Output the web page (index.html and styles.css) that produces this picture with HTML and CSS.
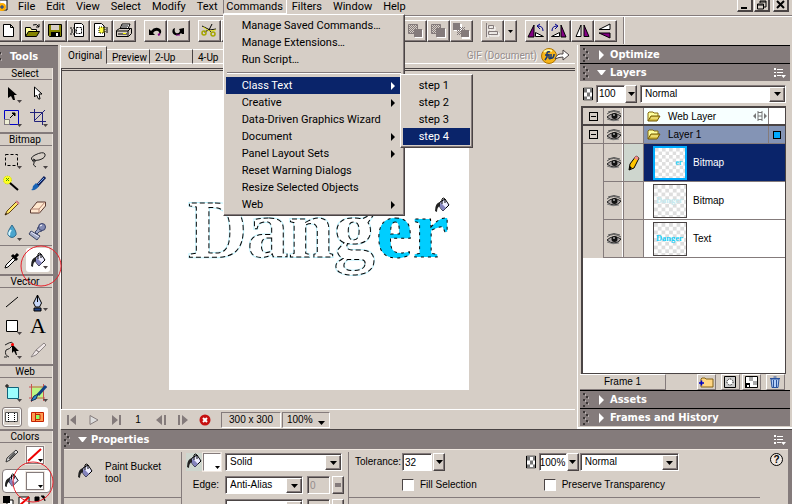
FILE: index.html
```html
<!DOCTYPE html>
<html lang="en">
<head>
<meta charset="utf-8">
<title>Graphics editor</title>
<link rel="stylesheet" href="styles.css">
</head>
<body>
<svg class="sprite" aria-hidden="true">
  <defs>
    <pattern id="checks" width="8" height="8" patternUnits="userSpaceOnUse"><rect width="8" height="8" fill="#fff"/><path d="M0 0h4v4H0zM4 4h4v4H4z" fill="#dedede"/></pattern>
    <pattern id="dots" width="2" height="2" patternUnits="userSpaceOnUse"><path d="M0 0h1v1H0zM1 1h1v1H1z" fill="#847b7b"/></pattern>
  </defs>
  <symbol id="fly" viewBox="0 0 24 24"><path d="M17 18h5l-2.500 3z" fill="#4a4444"/></symbol>
  <symbol id="down" viewBox="0 0 7 4"><path d="M0 0h7L3.500 4z"/></symbol>
  <symbol id="bucket" viewBox="0 0 16 16">
    <path d="M6 5l5-3 4 6-6 6-4-5z" fill="#c6c6f7" stroke="#000"/><path d="M7 6l4 5 3-3-3-5z" fill="#efefff"/><path d="M5 9l4 5 3-3-5-5z" fill="#8484bd"/>
    <path d="M8 7V2q1-2 3 0v4" fill="none" stroke="#000"/><path d="M6 5Q1 6 1 14l2 1q0-5 3-6z" fill="#222"/>
  </symbol>
  <symbol id="eye" viewBox="0 0 16 12"><path d="M1 4Q7-1 15 4M2 2Q8-1 14 2" fill="none" stroke="#555" stroke-width="1"/><path d="M1 7Q7 1 15 6q-2 4-7 4-4 0-7-3z" fill="#a8a2a2" stroke="#222"/><circle cx="8.500" cy="6" r="3" fill="#111"/><circle cx="8" cy="5" r="1" fill="#aaa"/><path d="M1 9q6 3 12 1" fill="none" stroke="#777"/></symbol>
  <symbol id="folder" viewBox="0 0 14 11"><path d="M1 10V2l1-1h4l1 1h4v3" fill="#ffff9c" stroke="#846b10"/><path d="M1 10l3-5h9l-3 5z" fill="#d6bd42" stroke="#735a08"/><path d="M4 7h7" stroke="#fff79c"/></symbol>
  <symbol id="checker" viewBox="0 0 10 13"><path d="M.5.5h9v12h-9z" fill="#fff" stroke="#000"/><path d="M1 1h3v4H1zM7 1h2v4H7zM4 5h3v4H4zM1 9h3v3H1zM7 9h2v3H7z" fill="#777"/></symbol>
  <symbol id="grip" viewBox="0 0 6 14"><path d="M0 0h2v2H0zM3 3h2v2H3zM0 6h2v2H0zM3 9h2v2H3zM0 12h2v2H0z" fill="#3a3535"/><path d="M2 1h1v2H2zM5 4h1v2H5zM2 7h1v2H2zM5 10h1v2H5z" fill="#b5adad"/></symbol>
  <symbol id="options" viewBox="0 0 12 10"><path d="M0 0h2v2H0zM0 4h2v1H0zM0 7h2v2H0zM3 1h6v1H3zM3 4h6v1H3zM3 7h4v1H3zM7 7h5L9.500 10z" fill="#fff"/></symbol>
</svg>

<div class="app">
  <header class="top">
    <nav class="menubar">
      <svg class="doc-icon" viewBox="0 0 8 12" aria-hidden="true"><path d="M0 0h7v10H2" fill="#fff" stroke="#000"/><circle cx="2" cy="7" r="4" fill="#ffad00"/><path d="M0 7h4M2 5v4" stroke="#0039a5"/></svg>
      <button>File</button><button>Edit</button><button>View</button><button>Select</button><button>Modify</button><button>Text</button>
      <div class="menu-host">
        <button class="open">Commands</button>
        <div class="menu main-menu">
          <button>Manage Saved Commands…</button>
          <button>Manage Extensions…</button>
          <button>Run Script…</button>
          <hr>
          <div class="sub-host">
            <button class="sub active">Class Text</button>
            <div class="menu sub-menu">
              <button>step 1</button><button>step 2</button><button>step 3</button><button class="active">step 4</button>
            </div>
          </div>
          <button class="sub">Creative</button>
          <button>Data-Driven Graphics Wizard</button>
          <button class="sub">Document</button>
          <button class="sub">Panel Layout Sets</button>
          <button>Reset Warning Dialogs</button>
          <button>Resize Selected Objects</button>
          <button class="sub">Web</button>
        </div>
      </div>
      <button>Filters</button><button>Window</button><button>Help</button>
      <div class="window-buttons">
        <button aria-label="Minimize"><svg viewBox="0 0 13 11"><path d="M3 7h6v2H3z"/></svg></button>
        <button aria-label="Restore"><svg viewBox="0 0 13 11"><path d="M5 1h6v6H9M5 1v2M5 2h6M2.500 4v5h6V4zM2 5h7" fill="none" stroke="#000"/></svg></button>
        <button class="close" aria-label="Close"><svg viewBox="0 0 13 11"><path d="M3 1l7 7M10 1L3 8" fill="none" stroke="#000" stroke-width="2"/></svg></button>
      </div>
    </nav>
    <div class="toolbar">
      <div class="group">
        <button aria-label="New"><svg viewBox="0 0 20 18"><path d="M4.500 2.500h7l3 3v9h-10zM11.500 2.500v3h3" fill="#fff" stroke="#000"/></svg></button>
        <button aria-label="Open"><svg viewBox="0 0 20 18"><path d="M3.500 14V5.500h5l1 2h5v2" fill="#ffff9c" stroke="#000"/><path d="M3.500 14.500l3-5h11l-3 5z" fill="#848400" stroke="#000"/><path d="M11 3q4-2 6 2M17 2v3h-3" fill="none" stroke="#000"/></svg></button>
        <button aria-label="Save"><svg viewBox="0 0 20 18"><path d="M3.500 2.500h13v12h-12l-1-1z" fill="#848400" stroke="#000"/><path d="M6 3h8v5H6z" fill="#d6cec6"/><path d="M6 10h9v5H6z"/><path d="M11 11h2v3h-2z" fill="#fff"/></svg></button>
        <button aria-label="Import"><svg viewBox="0 0 20 18"><path d="M6.500 1.500h7l2 2v11h-9z" fill="#fff" stroke="#000"/><path d="M8.500 5.500h5v6h-5zM2 6h6M3 8h6M3 10h6M2 12h6" fill="none" stroke="#000" stroke-dasharray="2 1"/></svg></button>
        <button aria-label="Export"><svg viewBox="0 0 20 18"><path d="M3.500 1.500h7l3 3v10h-10z" fill="#fff" stroke="#000"/><path d="M8 5h6v6H8z" fill="#ffff42" stroke="#000" stroke-dasharray="1 1"/><path d="M12 6h5M12 8h5M12 10h5" stroke="#000" stroke-dasharray="2 1"/></svg></button>
        <button aria-label="Print"><svg viewBox="0 0 20 18"><path d="M6 7l2-5h8l-2 5M8 4h6M7 6h6" fill="#fff" stroke="#000"/><path d="M2.500 8.500l3-2h12v5l-3 3h-12z" fill="#d6cec6" stroke="#000"/><path d="M3 9h11v5M14 9l3-3M4 12h9" fill="none" stroke="#000"/><path d="M9 11h3v1H9z" fill="#ff0"/></svg></button>
      </div>
      <div class="group">
        <button aria-label="Undo"><svg viewBox="0 0 20 18"><path d="M4 7v6h6l-2-2q2-3 5-2 2 1 1 4l2-2q1-4-3-5-4-1-7 3z"/><path d="M13 13l2-1" stroke="#840084" stroke-width="2"/></svg></button>
        <button aria-label="Redo"><svg viewBox="0 0 20 18"><path d="M16 6v6h-2l-1-1q-2 3-6 2-4-2-2-6l2-1q-1 4 1 5 3 1 4-2l-1-2z"/><path d="M8 13h4" stroke="#840084"/></svg></button>
      </div>
      <div class="group">
        <button aria-label="Cut"><svg viewBox="0 0 20 18"><path d="M3 4l8 4 6-1M13 2l-3 6-5 2M10 8l3 3" fill="none" stroke="#000"/><circle cx="5" cy="11" r="2" fill="none" stroke="#a5a500" stroke-width="1.500"/><circle cx="14" cy="12" r="2" fill="none" stroke="#a5a500" stroke-width="1.500"/><path d="M4 5l6 4M17 8l-7 1" stroke="#e7e721"/></svg></button>
        <button aria-label="Copy"></button><button aria-label="Paste"></button>
      </div>
      <div class="group order">
        <button aria-label="Bring to front"></button>
        <button aria-label="Bring forward"><svg viewBox="0 0 20 18"><path d="M10 8h8v8h-8z" fill="#fff"/><path d="M9 7h8v8H9z" fill="#847b7b"/><path d="M3.500 2.500h9v9h-9z" fill="url(#dots)" stroke="#847b7b"/></svg></button>
        <button aria-label="Send backward"><svg viewBox="0 0 20 18"><path d="M3.500 2.500h9v9h-9z" fill="url(#dots)" stroke="#847b7b"/><path d="M9 7h9v9H9z" fill="#fff"/><path d="M8 6h9v9H8z" fill="#847b7b"/></svg></button>
        <button aria-label="Send to back"><svg viewBox="0 0 20 18"><path d="M11 9h8v8h-8zM3 2h8v7H3z" fill="#fff"/><path d="M6 5h8v8H6z" fill="url(#dots)"/><path d="M2 1h7v7H2zM10 8h8v7h-8z" fill="#847b7b"/></svg></button>
      </div>
      <div class="group">
        <button aria-label="Align"><svg viewBox="0 0 20 18"><path d="M5 2v13M7 4h5v3H7zM7 10h9v3H7z" transform="translate(1 1)" fill="none" stroke="#fff"/><path d="M4.500 1v14M6.500 3.500h5v3h-5zM6.500 9.500h9v3h-9z" fill="none" stroke="#847b7b"/></svg></button>
        <button class="narrow" aria-label="Align options"><svg viewBox="0 0 10 18"><path d="M3 8h5l-2.500 3z"/></svg></button>
      </div>
      <div class="group">
        <button aria-label="Rotate left"><svg viewBox="0 0 20 18"><path d="M2 15h6V3z" fill="#840084" stroke="#000"/><path d="M9.500 14.500h8l-8-4z" fill="#fff" stroke="#000"/><path d="M17 9q0-5-5-5M14 2l-3 2 3 3" fill="none" stroke="#00008c"/></svg></button>
        <button aria-label="Rotate right"><svg viewBox="0 0 20 18"><path d="M12 15h5L12 3z" fill="#840084" stroke="#000"/><path d="M2.500 14.500h8v-4z" fill="#fff" stroke="#000"/><path d="M3 9q0-5 5-5M6 2l3 2-3 3" fill="none" stroke="#00008c"/></svg></button>
        <button aria-label="Flip horizontal"><svg viewBox="0 0 20 18"><path d="M12 14.500h5L12 3z" fill="#840084" stroke="#000"/><path d="M4 14.500h5V3z" fill="#fff" stroke="#000"/></svg></button>
        <button aria-label="Flip vertical"><svg viewBox="0 0 20 18"><path d="M4 11h11v5z" fill="#840084" stroke="#000"/><path d="M4 7.500h11V2z" fill="#fff" stroke="#000"/></svg></button>
      </div>
    </div>
  </header>

  <div class="workspace">
    <aside class="tools">
      <h2 class="tools-title"><svg viewBox="0 0 6 14"><use href="#grip"/></svg>Tools</h2>
      <section class="tool-section">
        <h3>Select</h3>
        <div class="tool-grid">
          <button aria-label="Pointer"><svg viewBox="0 0 24 24"><path d="M8 5v11l3-2 2 4h2l-1-5h3z"/><use href="#fly"/></svg></button>
          <button aria-label="Subselection"><svg viewBox="0 0 24 24"><path d="M8.500 5v10l2-2 2 4h1.500l-1-5h3z" fill="#fff" stroke="#000"/></svg></button>
          <button aria-label="Scale"><svg viewBox="0 0 24 24"><path d="M4.500 4.500h14v14h-14z" fill="none" stroke="#0000c6"/><path d="M4.500 13.500h5v5h-5z" fill="#efefd6" stroke="#847b7b"/><path d="M10 12l3-3M12 7h3v3z" fill="#000" stroke="#000"/><use href="#fly"/></svg></button>
          <button aria-label="Crop"><svg viewBox="0 0 24 24"><path d="M8.500 3v12.500H20M4 6.500h12.500V19M8 15L19 4" fill="none" stroke="#21217b"/><use href="#fly"/></svg></button>
        </div>
      </section>
      <section class="tool-section">
        <h3>Bitmap</h3>
        <div class="tool-grid">
          <button aria-label="Marquee"><svg viewBox="0 0 24 24"><path d="M5.500 6.500h12v11h-12z" fill="none" stroke="#000" stroke-dasharray="3 2"/><use href="#fly"/></svg></button>
          <button aria-label="Lasso"><svg viewBox="0 0 24 24"><path d="M7 13q-4-3 2-6 8-4 10-1 1 4-6 6-5 1-7 0M7 11q3 0 2 3-2 1-2-1M8 15q-2 2 2 4" fill="none" stroke="#222"/><use href="#fly"/></svg></button>
          <button aria-label="Magic wand"><svg viewBox="0 0 24 24"><circle cx="7.500" cy="8" r="4" fill="#ffff21" stroke="#c6d600" stroke-dasharray="1 1"/><path d="M6 6l3 3M9 6L6 9" stroke="#429c00"/><path d="M10 11l8 7" stroke="#000" stroke-width="2"/></svg></button>
          <button aria-label="Brush"><svg viewBox="0 0 24 24"><path d="M19 5l-8 9" stroke="#10215a" stroke-width="3"/><path d="M18 6l-6 6" stroke="#73a5ef"/><path d="M10 11l3 3q-3 5-8 4 2-1 2-4z" fill="#1863b5"/></svg></button>
          <button aria-label="Pencil"><svg viewBox="0 0 24 24"><path d="M17 5l2 2L9 17l-4 2 2-4z" fill="#ffe763" stroke="#634218"/><path d="M16 5l3 3" stroke="#d6848c" stroke-width="2"/><path d="M5 19l2-1-1-1z"/></svg></button>
          <button aria-label="Eraser"><svg viewBox="0 0 24 24"><path d="M4.500 14L11 6h8.500v4l-6 7h-9z" fill="#ffe7ce" stroke="#5a3931"/><path d="M5 13h8l6-7M13 13v4" fill="none" stroke="#b58473"/></svg></button>
          <button aria-label="Blur"><svg viewBox="0 0 24 24"><path d="M12 5q-5 7-4 10 4 5 8 0 1-3-4-10z" fill="#4aa5ce" stroke="#316b8c"/><path d="M11 10q-3 4-1 5" stroke="#d6f7ff" fill="none" stroke-width="2"/><use href="#fly"/></svg></button>
          <button aria-label="Rubber stamp"><svg viewBox="0 0 24 24"><path d="M5 11l9 5-3 4-8-6z" fill="#a5adc6" stroke="#394263"/><path d="M5 12l8 5" stroke="#e7e7ff"/><path d="M9 12q3-2 3-5l4 4q-3 0-5 3z" fill="#9ca5c6" stroke="#424a6b"/><circle cx="16" cy="7" r="3.500" fill="#848cb5" stroke="#39426b"/><path d="M14 6l2-1" stroke="#fff"/></svg></button>
        </div>
        <div class="tool-grid ruled">
          <button aria-label="Eyedropper"><svg viewBox="0 0 24 24"><path d="M14 9l-8 8-1 3 3-1 8-8" fill="#fff" stroke="#000"/><path d="M12 7l5 5M15 9l3-3" stroke="#000" stroke-width="3"/></svg></button>
          <button class="picked" aria-label="Paint bucket"><svg viewBox="0 0 24 24"><use href="#bucket" x="4" y="4" width="16" height="16"/><use href="#fly"/></svg></button>
        </div>
      </section>
      <section class="tool-section">
        <h3>Vector</h3>
        <div class="tool-grid">
          <button aria-label="Line"><svg viewBox="0 0 24 24"><path d="M6 17L18 7" stroke="#000"/></svg></button>
          <button aria-label="Pen"><svg viewBox="0 0 24 24"><path d="M11.500 5l-4 8 2 4h4l2-4z" fill="#c6d6f7" stroke="#000"/><path d="M11.500 5v7M8 18h7v3H8z" fill="#214284" stroke="#000"/><use href="#fly"/></svg></button>
          <button aria-label="Rectangle"><svg viewBox="0 0 24 24"><path d="M6.500 6.500h11v11h-11z" fill="#fff" stroke="#000"/><use href="#fly"/></svg></button>
          <button class="type-tool" aria-label="Text">A</button>
          <button aria-label="Freeform"><svg viewBox="0 0 24 24"><path d="M5 7q10-6 7 1-2 3-6 4-2 5 3 7M7 19H4" fill="none" stroke="#222"/><path d="M12 6v9l2-2 2 4h1l-1-4h3z"/><circle cx="12.500" cy="6.500" r="1.500" fill="#f00"/><use href="#fly"/></svg></button>
          <button aria-label="Knife"><svg viewBox="0 0 24 24"><path d="M18 5l2 2-7 7-3-2zM10 12l3 2-3 3-5 2z" fill="#efe7e7" stroke="#8c8484"/></svg></button>
        </div>
      </section>
      <section class="tool-section web-section">
        <h3>Web</h3>
        <div class="tool-grid web-grid">
          <button aria-label="Hotspot"><svg viewBox="0 0 24 24"><path d="M7.500 6.500h11v11h-11z" fill="#9cffff" stroke="#10637b"/><path d="M5 5h4M7 3v4" stroke="#000"/><use href="#fly"/></svg></button>
          <button aria-label="Slice"><svg viewBox="0 0 24 24"><path d="M5 5h12v13H5z" fill="#bdf784"/><path d="M3 6h18M3 17h16M5.500 3v18M17.500 3v17" stroke="#c65252"/><path d="M20 5l-8 9" stroke="#104284" stroke-width="3"/><path d="M12 13l-2 5-5 2 3-5z" fill="#298cce" stroke="#183152"/><use href="#fly"/></svg></button>
          <button class="framed" aria-label="Hide slices"><svg viewBox="0 0 24 24"><path d="M5.500 7.500h12v9h-12z" fill="#fff" stroke="#555"/><path d="M8.500 8v9M14.500 8v9" stroke="#000" stroke-dasharray="1 1"/></svg></button>
          <button class="picked" aria-label="Show slices"><svg viewBox="0 0 24 24"><path d="M5.500 7.500h12v9h-12z" fill="#ff9c52" stroke="#c62100"/><path d="M9.500 7v10M9 9.500h5v5H9" fill="#8cff63" stroke="#c62100"/></svg></button>
        </div>
      </section>
      <section class="tool-section colors">
        <h3>Colors</h3>
        <div class="color-row">
          <svg viewBox="0 0 24 24"><path d="M16 7l2 2-8 8-4 2 1-4z" fill="#ddd" stroke="#333"/><path d="M15 10l-6 6" stroke="#555" stroke-width="2"/></svg>
          <button class="swatch none" aria-label="Stroke color"><svg viewBox="0 0 16 14"><path d="M1 13L14 1" stroke="#e00" stroke-width="2"/><path d="M11 11h5l-2.500 3z"/></svg></button>
        </div>
        <div class="color-row chosen">
          <svg viewBox="0 0 24 24"><use href="#bucket" x="4" y="4" width="15" height="15"/></svg>
          <button class="swatch" aria-label="Fill color"><svg viewBox="0 0 16 14"><path d="M11 11h5l-2.500 3z"/></svg></button>
        </div>
        <div class="color-actions">
          <button aria-label="Default colors"><svg viewBox="0 0 14 12"><path d="M6 5h6v6H6z" fill="#fff" stroke="#000"/><path d="M2 1h7v7H2z"/></svg></button>
          <button aria-label="No color"><svg viewBox="0 0 14 12"><path d="M2 2h10v9H2z" fill="#fff" stroke="#000"/><path d="M2 11L12 2" stroke="#e00" stroke-width="2"/></svg></button>
          <button aria-label="Swap colors"><svg viewBox="0 0 14 12"><path d="M2 2h4v4H2zM8 1h3l1 5" fill="#000" stroke="#000"/></svg></button>
        </div>
      </section>
      <svg class="ring ring-tool" viewBox="0 0 42 42" aria-hidden="true"><circle cx="21" cy="21" r="20"/></svg>
      <svg class="ring ring-color" viewBox="0 0 42 42" aria-hidden="true"><circle cx="21" cy="21" r="20"/></svg>
    </aside>

    <div class="stage">
      <div class="upper">
        <main class="document">
          <div class="tabs">
            <button class="current">Original</button><button>Preview</button><button>2-Up</button><button>4-Up</button>
            <div class="export"><span>GIF (Document)</span>
              <svg viewBox="0 0 30 18"><circle cx="8" cy="9" r="7.500" fill="#f7b518" stroke="#ad7300"/><path d="M3 5q3-3 8-1" stroke="#fff79c" stroke-width="2" fill="none"/><path d="M4 13l2-3V6q1-2 3-1M4 8h4M8 7v4q1 2 2-1V7v4q2 1 3-3V7" fill="none" stroke="#183973" stroke-width="1.500"/><path d="M14 12q2-6 8-5V3l6 5-6 5v-3q-4 0-8 2z" fill="#fff" stroke="#4a4242"/></svg>
            </div>
          </div>
          <div class="pasteboard">
            <div class="page">
              <svg class="artwork" viewBox="0 0 300 300" role="img" aria-label="Danger">
                <text x="19" y="167" class="outline glow">Dang</text>
                <text x="19" y="167" class="outline">Dang</text>
                <text x="207" y="167" class="solid">er</text>
              </svg>
              <svg class="cursor" viewBox="0 0 16 16" aria-hidden="true"><use href="#bucket"/></svg>
            </div>
          </div>
          <div class="status">
            <button aria-label="First frame"><svg viewBox="0 0 12 12"><path d="M1 1h2v10H1zM10 1v10L4 6z"/></svg></button>
            <button aria-label="Play"><svg viewBox="0 0 12 12"><path d="M2 1.500l8 4.500-8 4.500z" fill="#ddd" stroke="#847b7b"/></svg></button>
            <button aria-label="Last frame"><svg viewBox="0 0 12 12"><path d="M9 1h2v10H9zM2 1v10l6-5z"/></svg></button>
            <output>1</output>
            <button aria-label="Previous frame"><svg viewBox="0 0 12 12"><path d="M9 1h2v10H9zM7 1v10L1 6z"/></svg></button>
            <button aria-label="Next frame"><svg viewBox="0 0 12 12"><path d="M1 1h2v10H1zM5 1v10l6-5z"/></svg></button>
            <button aria-label="Stop"><svg viewBox="0 0 12 12"><circle cx="6" cy="6" r="5.500" fill="#c61010"/><path d="M4 4l4 4M8 4L4 8" stroke="#fff" stroke-width="2"/></svg></button>
            <span class="readout">300 x 300</span>
            <button class="readout zoom">100%<svg viewBox="0 0 7 4"><use href="#down"/></svg></button>
          </div>
        </main>

        <aside class="panels">
          <h2 class="panel-head"><svg class="grip" viewBox="0 0 6 14"><use href="#grip"/></svg><i class="closed"></i>Optimize</h2>
          <h2 class="panel-head"><svg class="grip" viewBox="0 0 6 14"><use href="#grip"/></svg><i></i>Layers<svg class="opts" viewBox="0 0 12 10"><use href="#options"/></svg></h2>
          <div class="layer-controls">
            <svg class="checker" viewBox="0 0 10 13"><use href="#checker"/></svg>
            <input class="opacity" aria-label="Opacity" value="100"><button class="drop" aria-label="Opacity slider"><svg viewBox="0 0 7 4"><use href="#down"/></svg></button>
            <span class="combo"><select aria-label="Blend mode"><option>Normal</option></select><span><svg viewBox="0 0 7 4"><use href="#down"/></svg></span></span>
          </div>
          <ul class="layers">
            <li class="group-row web-row">
              <span class="toggle"><b></b></span><span class="eye"><svg viewBox="0 0 16 12"><use href="#eye"/></svg></span><span class="lock"></span>
              <span class="name"><svg class="folder" viewBox="0 0 14 11"><use href="#folder"/></svg>Web Layer<svg class="share" viewBox="0 0 14 10"><path d="M5 0v10M9 0v10M5 1.500h4M5 5h4M5 8.500h4" fill="none" stroke="#777"/><path d="M3 2v6L0 5zM11 2v6l3-3z" fill="#777"/></svg></span><span class="mark"></span>
            </li>
            <li class="group-row layer-row">
              <span class="toggle"><b></b></span><span class="eye"><svg viewBox="0 0 16 12"><use href="#eye"/></svg></span><span class="lock"></span>
              <span class="name"><svg class="folder" viewBox="0 0 14 11"><use href="#folder"/></svg>Layer 1</span><span class="mark"><b></b></span>
            </li>
            <li class="item selected">
              <span class="toggle"></span><span class="eye"><svg viewBox="0 0 16 12"><use href="#eye"/></svg></span>
              <span class="lock"><svg viewBox="0 0 12 16"><path d="M8 1l3 2-5 10-5 2 1-6z" fill="#ffc600" stroke="#000"/><path d="M7 2l3 2" stroke="#f78c8c" stroke-width="3"/><path d="M1 15l3-2-2-2z"/></svg></span>
              <span class="name"><svg class="thumb" viewBox="0 0 34 34"><rect width="34" height="34" fill="url(#checks)"/><text x="23" y="19" fill="#2cd0f5">er</text></svg>Bitmap</span>
            </li>
            <li class="item">
              <span class="toggle"></span><span class="eye"><svg viewBox="0 0 16 12"><use href="#eye"/></svg></span><span class="lock"></span>
              <span class="name"><svg class="thumb" viewBox="0 0 34 34"><rect width="34" height="34" fill="url(#checks)"/><text x="2" y="19" fill="#c5eaf0">Danger</text></svg>Bitmap</span>
            </li>
            <li class="item">
              <span class="toggle"></span><span class="eye"><svg viewBox="0 0 16 12"><use href="#eye"/></svg></span><span class="lock"></span>
              <span class="name"><svg class="thumb" viewBox="0 0 34 34"><rect width="34" height="34" fill="url(#checks)"/><text x="2" y="19" fill="#18cef7">Danger</text></svg>Text</span>
            </li>
          </ul>
          <div class="layer-foot">
            <button class="frame">Frame 1</button>
            <button aria-label="New layer"><svg viewBox="0 0 16 12"><path d="M3 10.500V3l1-1h3l1 1h7v8H3z" fill="#ffd684" stroke="#846318"/><path d="M1 7h5M3.500 4.500v5" stroke="#0000c6" stroke-width="1.500"/></svg></button>
            <button aria-label="Add mask"><svg viewBox="0 0 16 12"><path d="M2.500.5h11v11h-11z" fill="#ccc" stroke="#000"/><circle cx="8" cy="6" r="3" fill="#fff" stroke="#000" stroke-dasharray="1 1"/></svg></button>
            <button aria-label="New bitmap"><svg viewBox="0 0 16 12"><path d="M2.500.5h12v11h-12z" fill="#fff" stroke="#000"/><path d="M6 1h4v4H6zM10 5h4v4h-4z" fill="#aaa"/><path d="M2 7h5v5H2z"/><path d="M4 9h2v2H4z" fill="#fff"/></svg></button>
            <button aria-label="Delete"><svg viewBox="0 0 16 12"><path d="M4 3h8l-1 8.500H5z" fill="#b5cef7" stroke="#29529c"/><path d="M3 2.500h10M6.500 1h3M6.500 4v7M9.500 4v7" stroke="#29529c"/></svg></button>
          </div>
          <h2 class="panel-head"><svg class="grip" viewBox="0 0 6 14"><use href="#grip"/></svg><i class="closed"></i>Assets</h2>
          <h2 class="panel-head"><svg class="grip" viewBox="0 0 6 14"><use href="#grip"/></svg><i class="closed"></i>Frames and History</h2>
        </aside>
      </div>

      <section class="properties">
        <h2 class="panel-head"><svg class="grip" viewBox="0 0 6 14"><use href="#grip"/></svg><i></i>Properties<svg class="opts" viewBox="0 0 12 10"><use href="#options"/></svg></h2>
        <div class="prop-body">
          <div class="prop-tool"><div class="ruled-box"><svg viewBox="0 0 16 16"><use href="#bucket"/></svg><p>Paint Bucket<br>tool</p></div></div>
          <div class="prop-fill">
            <div class="field-row"><span class="bucket-chip"><svg viewBox="0 0 16 16"><use href="#bucket"/></svg></span>
              <button class="swatch" aria-label="Fill color"><svg viewBox="0 0 16 14"><path d="M11 11h5l-2.500 3z"/></svg></button>
              <span class="combo"><select aria-label="Fill type"><option>Solid</option></select><span><svg viewBox="0 0 7 4"><use href="#down"/></svg></span></span></div>
            <div class="field-row"><label for="edge">Edge:</label>
              <span class="combo edge"><select id="edge"><option>Anti-Alias</option></select><span><svg viewBox="0 0 7 4"><use href="#down"/></svg></span></span>
              <input class="feather" aria-label="Feather" value="0" disabled><button class="drop off" aria-label="Feather slider"><b></b></button></div>
            <div class="field-row"><label for="texture"></label>
              <span class="combo edge"><select id="texture" aria-label="Texture"><option></option></select><span></span></span>
              <input class="feather" aria-label="Texture amount" disabled><button class="drop off" aria-label="Texture slider"></button></div>
          </div>
          <div class="prop-options">
            <div class="ruled-box columns">
              <div>
                <div class="field-row"><label class="tol" for="tolerance">Tolerance:</label><input id="tolerance" class="tol-input" value="32"><button class="drop" aria-label="Tolerance slider"><svg viewBox="0 0 7 4"><use href="#down"/></svg></button></div>
                <div class="field-row check"><input type="checkbox" id="fillsel"><label for="fillsel">Fill Selection</label></div>
              </div>
              <div class="blend">
                <div class="field-row"><svg class="checker" viewBox="0 0 10 13"><use href="#checker"/></svg><input class="alpha" aria-label="Fill opacity" value="100%"><button class="drop" aria-label="Fill opacity slider"><svg viewBox="0 0 7 4"><use href="#down"/></svg></button>
                  <span class="combo mode"><select aria-label="Fill blend mode"><option>Normal</option></select><span><svg viewBox="0 0 7 4"><use href="#down"/></svg></span></span></div>
                <div class="field-row check"><input type="checkbox" id="preserve"><label for="preserve">Preserve Transparency</label></div>
              </div>
            </div>
          </div>
          <button class="help" aria-label="Help">?</button>
        </div>
      </section>
    </div>
  </div>
</div>
</body>
</html>
```
FILE: styles.css
```css
:root {
  --face: #d6cec6;
  --dark: #847b7b;
  --edge: #4a4444;
  --navy: #0a246a;
  --small: "Liberation Sans", sans-serif;
  --title: "DejaVu Sans Condensed", "DejaVu Sans", sans-serif;
}
* { box-sizing: border-box; }
body { margin: 0; background: var(--face); color: #000; font: 11px/17px Roboto, sans-serif; }
h2, h3, p, ul { margin: 0; padding: 0; }
button, input, select { margin: 0; padding: 0; border: 0; border-radius: 0; background: none; color: inherit; font: inherit; }
svg { display: block; flex: none; }
.sprite { position: absolute; width: 0; height: 0; }
.app { display: flex; flex-direction: column; height: 100vh; overflow: hidden; }

/* menu bar */
.menubar { display: flex; height: 15px; padding-right: 3px; }
.menubar > button { height: 12px; line-height: 11px; margin-right: 11px; }
.doc-icon { width: 8px; height: 12px; margin-right: 10px; }
.menu-host { position: relative; margin: 0 5px 0 -6px; }
.open { display: block; width: 64px; height: 14px; line-height: 13px; border: solid; border-width: 0 1px 1px; border-color: #fff #fff #fff var(--dark); }
.menu { position: absolute; z-index: 5; padding: 2px; background: var(--face); border: 1px solid; border-color: #fff var(--edge) var(--edge) #fff; box-shadow: inset -1px -1px var(--dark); }
.menu button { display: block; width: 100%; height: 17px; padding-left: 16px; text-align: left; white-space: nowrap; }
.main-menu { top: 14px; left: 0; width: 182px; }
.menu hr { height: 2px; margin: 4px 1px 3px; border: 0; border-top: 1px solid var(--dark); background: #fff; }
.menu .sub { position: relative; }
.menu .sub::after { content: ""; position: absolute; right: 7px; top: 5px; border: solid transparent; border-width: 4px 0 4px 4px; border-left-color: currentColor; }
.menu .active { background: var(--navy); color: #fff; }
.sub-host { position: relative; }
.sub-menu { left: 174px; top: -3px; width: 73px; }
.window-buttons { display: flex; gap: 1px; margin-left: auto; }
.window-buttons button { width: 16px; height: 12px; border: solid; border-width: 0 2px 2px 1px; border-color: #fff var(--edge) var(--edge) #fff; }
.window-buttons svg { width: 13px; height: 11px; }
.window-buttons .close { margin-left: 2px; }

/* toolbar */
.toolbar { display: flex; align-items: flex-start; gap: 8px; height: 30px; padding-top: 4px; border-top: 1px solid var(--dark); box-shadow: inset 0 1px #fff; }
.group { display: flex; flex: none; }
.group button { width: 23px; height: 22px; border: 1px solid; border-color: #fff var(--edge) var(--edge) #fff; box-shadow: inset -1px -1px var(--dark); }
.group:first-child { margin-left: -2px; }
.group svg { width: 20px; height: 18px; }
.group .narrow { width: 13px; }
.group .narrow svg { width: 10px; }
.order { margin-left: 106px; }
.toolbar::after { content: ""; height: 27px; margin: -3px 0 0 -2px; border-left: 1px solid var(--dark); box-shadow: 1px 0 #fff; }

/* tools column */
.workspace { display: flex; flex: 1; min-height: 0; }
.tools { position: relative; display: flex; flex-direction: column; gap: 2px; width: 58px; flex: none; padding-right: 5px; background: var(--dark); border-top: 1px solid var(--edge); }
.tools-title { display: flex; flex: none; align-items: center; gap: 8px; height: 20px; margin-left: -4px; color: #fff; font: bold 11px/17px var(--title); }
.tools-title svg { width: 6px; height: 14px; }
.tool-section { flex: none; background: var(--face); border-right: 1px solid #efe7e0; padding-bottom: 2px; }
.tool-section h3 { height: 12px; padding-right: 2px; border-bottom: 1px solid var(--dark); font: 10px/12px Roboto, sans-serif; text-align: center; }
.tool-grid { display: grid; grid-template-columns: 24px 24px; column-gap: 2px; padding-top: 2px; }
.web-grid { padding-top: 3px; }
.tool-grid button { width: 24px; height: 24px; }
.tool-grid svg, .color-row > svg { width: 24px; height: 24px; }
.tool-section .ruled { margin-top: 1px; padding-top: 2px; border-top: 1px solid var(--dark); }
.tool-grid .picked { background: #fff; border-radius: 3px; }
.tool-grid .framed { border: 1px solid var(--dark); border-radius: 3px; box-shadow: inset 0 0 0 1px #fff; }
.tool-grid .type-tool { font: 22px/24px "Liberation Serif", serif; }
.web-section { padding-bottom: 0; }
.web-grid .picked, .web-grid .framed { height: 20px; width: 20px; margin: 2px; }
.web-grid .picked svg { margin: -2px; }
.web-grid .framed svg { margin: -3px; }
.color-row { display: flex; align-items: center; gap: 2px; height: 24px; }
.tools .colors { flex: 1 1 0; min-height: 0; padding-bottom: 0; overflow: hidden; }
.chosen { margin: 2px 1px 0 2px; background: #fff; border-radius: 4px; border: 1px solid var(--dark); }
.chosen > svg { margin-left: -3px; }
.swatch { width: 18px; height: 18px; flex: none; background: #fff; border: 1px solid; border-color: var(--dark) #fff #fff var(--dark); outline: 1px solid #efe7e0; }
.color-row .swatch { border-color: var(--dark); }
.swatch svg { width: 16px; height: 16px; }
.color-actions { display: flex; gap: 2px; padding: 2px 0 0 1px; }
.color-actions svg { width: 14px; height: 12px; }
.ring { position: absolute; width: 42px; height: 42px; fill: none; stroke: #e7212b; }
.ring-tool { left: 20px; top: 199px; }
.ring-color { left: 12px; top: 415px; }

/* document window */
.stage { display: flex; flex: 1; flex-direction: column; min-width: 0; }
.upper { display: flex; flex: 1; min-height: 0; }
.document { display: flex; flex: 1; flex-direction: column; min-width: 0; margin: 0 2px; border-left: 1px solid #fff; }
.tabs { display: flex; align-items: flex-end; height: 23px; padding-bottom: 4px; }
.tabs button { height: 15px; line-height: 15px; width: 43px; padding-left: 5px; text-align: left; border: solid; border-width: 1px 1px 1px 0; border-color: #fff var(--edge) #fff #fff; font-size: 10px; }
.tabs .current { height: 18px; width: 46px; padding-left: 7px; border-bottom-color: var(--face); }
.export { display: flex; flex: 1; justify-content: flex-end; align-items: center; gap: 4px; height: 16px; padding-right: 4px; border-bottom: 1px solid #fff; color: #948c8c; text-shadow: 1px 1px #fff; font: 10px/16px Roboto, sans-serif; }
.export svg { width: 30px; height: 18px; }
.pasteboard { display: flex; flex: 1; align-items: center; justify-content: center; min-height: 0; border: solid; border-width: 3px 0 0 1px; border-color: var(--edge); border-top-style: double; }
.page { position: relative; width: 300px; height: 300px; flex: none; background: #fff; }
.artwork { width: 300px; height: 300px; font: bold 82px "Liberation Serif", serif; }
.outline { fill: #fff; stroke: #000; stroke-dasharray: 5 3; shape-rendering: crispEdges; }
.glow { stroke: #bdf3ff; stroke-width: 2; stroke-dasharray: none; }
.solid { fill: #00ceff; stroke: #000; stroke-dasharray: 3 4; shape-rendering: crispEdges; }
.cursor { position: absolute; left: 265px; top: 107px; width: 16px; height: 16px; }
.status { display: flex; align-items: center; height: 20px; padding-left: 5px; border-top: 1px solid #fff; font: 10px/14px var(--small); }
.status > button:not(.readout) { width: 12px; margin-right: 10px; fill: var(--dark); }
.status svg { width: 12px; height: 12px; }
.status output { width: 12px; margin-right: 11px; text-align: center; }
.readout { width: 60px; height: 16px; margin-right: 1px; border: 1px solid; border-color: var(--dark) #fff #fff var(--dark); text-align: center; }
.zoom { display: flex; justify-content: space-between; align-items: center; width: 48px; padding: 0 4px; }
.status .zoom svg { width: 7px; height: 4px; margin-top: 6px; }

/* side panels */
.panels { display: flex; flex-direction: column; width: 215px; flex: none; padding: 0 2px 1px; border-left: 1px solid #fff; border-bottom: 2px solid #fff; }
.panel-head { display: flex; align-items: center; flex: none; height: 18px; padding: 0 4px 0 3px; background: var(--dark); border-top: 1px solid #000; color: #fff; font: bold 11px/16px var(--title); }
.panel-head .grip { width: 6px; height: 14px; }
.panel-head i { width: 9px; margin: 0 4px 0 8px; border: solid transparent; border-width: 5px 4px 0; border-top-color: #fff; }
.panel-head .closed { border-width: 5px 0 5px 5px; border-top-color: transparent; border-left-color: #fff; width: 5px; margin: 0 6px 0 10px; }
.opts { width: 12px; height: 10px; margin-left: auto; }
.layer-controls { display: flex; align-items: center; height: 25px; padding: 0 4px 0 3px; font: 10px/15px var(--small); }
.checker { width: 10px; height: 14px; margin-right: 3px; }
input:not([type="checkbox"]) { height: 18px; padding-left: 2px; background: #fff; border: 1px solid; border-color: var(--dark) #fff #fff var(--dark); box-shadow: inset 1px 1px var(--edge); }
.opacity { width: 29px; }
.drop { display: grid; place-items: center; width: 12px; height: 18px; flex: none; border: 1px solid; border-color: #fff var(--edge) var(--edge) #fff; box-shadow: inset -1px -1px var(--dark); }
.drop svg, .combo svg { width: 7px; height: 4px; }
.combo { display: flex; flex: 1; height: 18px; min-width: 0; background: #fff; border: 1px solid; border-color: var(--dark) #fff #fff var(--dark); box-shadow: inset 1px 1px var(--edge); }
.combo select { flex: 1; min-width: 0; appearance: none; padding-left: 4px; }
.combo span { display: grid; place-items: center; width: 16px; margin: 1px 0 0; background: var(--face); border: 1px solid; border-color: #fff var(--edge) var(--edge) #fff; box-shadow: inset -1px -1px var(--dark); }
.layer-controls .combo { margin-left: 3px; }
.layers { flex: 1; min-height: 0; margin: 0 4px 0 1px; list-style: none; background: #fff; border: solid var(--edge); border-width: 2px 1px 1px 2px; font: 10px/15px var(--small); }
.layers li { display: grid; grid-template-columns: 21px 20px 20px 1fr 17px; }
.layers li > span { display: flex; align-items: center; }
.group-row { height: 18px; border-bottom: 2px solid var(--edge); }
.layer-row { border-bottom: 1px solid var(--dark); }
.toggle { justify-content: center; background: var(--face); border-right: 1px solid var(--dark); }
.toggle b { width: 9px; height: 9px; border: 1px solid #000; background: linear-gradient(#000, #000) center / 5px 1px no-repeat; }
.eye, .lock { justify-content: center; background: var(--face); border-right: 1px solid var(--dark); }
.eye { box-shadow: inset -1px 0 #fff; }
.eye svg { width: 16px; height: 12px; }
.lock svg { width: 12px; height: 16px; }
.folder { width: 14px; height: 11px; margin: 0 7px 0 3px; }
.share { width: 14px; height: 10px; margin: 0 1px 0 auto; }
.web-row .name { background: #f7ffff; }
.layer-row .name, .layer-row .mark { background: #8494b5; }
.mark { justify-content: center; border-left: 1px solid var(--dark); }
.mark b { width: 8px; height: 8px; background: #0af; border: 1px solid #000; }
.item { height: 38px; }
.item .name { grid-column: 4 / 6; gap: 6px; padding-left: 9px; border-bottom: 1px solid var(--dark); }
.item .eye, .item .lock { border-bottom: 1px solid var(--dark); }
.thumb { width: 34px; height: 34px; border: 1px solid var(--edge); font: bold 9px "Liberation Serif", serif; }
.selected .name { background: var(--navy); color: #fff; }
.selected .lock { background: #ced6ce; }
.selected .thumb { border: 2px solid #00adff; }
.layer-foot { display: flex; justify-content: flex-end; gap: 2px; height: 16px; padding-right: 5px; font: 10px/14px var(--small); }
.layer-foot button { width: 19px; height: 16px; border: 1px solid; border-color: #fff var(--dark) var(--dark) #fff; }
.layer-foot svg { width: 16px; height: 12px; }
.layer-foot .frame { width: 86px; margin-right: auto; border-left: 0; }
.layer-foot button:last-child { margin-left: 3px; }
.frame + button { margin-right: 3px; }

/* properties */
.properties { display: flex; flex-direction: column; height: 75px; flex: none; padding-right: 2px; margin-left: 3px; background: var(--dark); overflow: hidden; border-top: 1px solid var(--edge); }
.properties .panel-head { height: 19px; border: 0; }
.prop-body { display: flex; flex: 1; margin: 0 2px 0 3px; padding-top: 2px; background: var(--face); border-top: 1px solid #efe7e0; font: 10px/12px var(--small); }
.prop-tool { width: 118px; flex: none; border-right: 1px solid var(--dark); }
.ruled-box { display: flex; height: 46px; border-bottom: 1px solid var(--dark); }
.prop-tool svg { width: 16px; height: 16px; margin: 11px 12px 0 13px; }
.prop-tool p { margin-top: 9px; }
.prop-fill { display: flex; flex-direction: column; gap: 5px; width: 167px; flex: none; padding: 1px 4px 0; border-right: 1px solid var(--dark); }
.field-row { display: flex; align-items: center; height: 18px; flex: none; }
.prop-fill .combo { margin-left: 4px; margin-right: 2px; }
.prop-fill label { width: 33px; text-align: right; margin-right: 2px; }
.bucket-chip { width: 16px; height: 18px; margin-right: 1px; background: #ced6ce; }
.bucket-chip svg { width: 16px; height: 16px; }
.prop-fill .edge { flex: 0 0 78px; }
.feather { width: 23px; margin: 0 2px; }
.prop-fill .feather { background: var(--face); color: #948c8c; }
.off b { width: 6px; height: 4px; background: var(--dark); }
.prop-options { flex: 1; }
.columns { gap: 49px; padding: 1px 0 0 6px; }
.columns > div { display: flex; flex-direction: column; gap: 5px; }
.tol { width: 47px; }
.tol-input { width: 30px; margin-right: 1px; }
.check { padding-left: 47px; gap: 6px; }
.blend .check { padding-left: 18px; }
.check input { appearance: none; width: 12px; height: 12px; background: #fff; border: 1px solid; border-color: var(--edge) #fff #fff var(--edge); }
.properties .alpha { width: 28px; padding-left: 0; }
.mode { flex: 0 0 99px; margin-left: 1px; }
.help { width: 13px; height: 13px; margin: 1px 5px 0 10px; border: 1px solid #000; border-radius: 50%; background: #efe7e0; font: bold 10px/11px var(--small); }
```
